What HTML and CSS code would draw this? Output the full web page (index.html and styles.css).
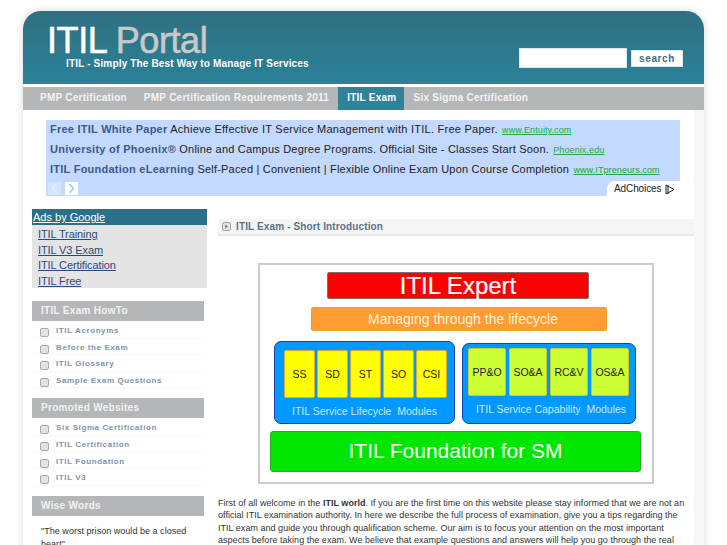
FILE: index.html
```html
<!DOCTYPE html>
<html lang="en">
<head>
<meta charset="utf-8">
<title>ITIL Portal</title>
<link rel="stylesheet" href="styles.css">
</head>
<body>
<div class="page">
  <header class="header">
    <div class="brand">
      <div class="logo">ITIL <span class="logo-light">Portal</span></div>
      <div class="tagline">ITIL - Simply The Best Way to Manage IT Services</div>
    </div>
    <form class="search">
      <input class="search-input" type="text" aria-label="Search">
      <button class="search-btn" type="button">search</button>
    </form>
  </header>
  <nav class="nav">
    <a class="nav-item">PMP Certification</a>
    <a class="nav-item">PMP Certification Requirements 2011</a>
    <a class="nav-item nav-active">ITIL Exam</a>
    <a class="nav-item">Six Sigma Certification</a>
  </nav>
  <div class="content">
    <section class="adbox">
      <p class="ad"><b>Free ITIL White Paper</b> Achieve Effective IT Service Management with ITIL. Free Paper. <a>www.Entuity.com</a></p>
      <p class="ad ad-tight"><b>University of Phoenix®</b> Online and Campus Degree Programs. Official Site - Classes Start Soon. <a>Phoenix.edu</a></p>
      <p class="ad ad-tight"><b>ITIL Foundation eLearning</b> Self-Paced | Convenient | Flexible Online Exam Upon Course Completion <a>www.ITpreneurs.com</a></p>
      <div class="ad-foot">
        <div class="arrows">
          <span class="arrow arrow-off"><svg width="7" height="11" viewBox="0 0 7 11"><path d="M5.5 1 1.5 5.5 5.5 10" fill="none" stroke="#e6effe" stroke-width="1.6"/></svg></span>
          <span class="arrow"><svg width="7" height="11" viewBox="0 0 7 11"><path d="M1.5 1 5.5 5.5 1.5 10" fill="none" stroke="#a9c4f0" stroke-width="1.6"/></svg></span>
        </div>
        <div class="adchoices">AdChoices <svg width="10" height="11" viewBox="0 0 10 11"><path d="M1 1 9 5.5 1 10Z M3 1V10" fill="none" stroke="#222" stroke-width="1"/></svg></div>
      </div>
    </section>
    <div class="columns">
      <aside class="sidebar">
        <div class="gads">
          <div class="gads-title">Ads by Google</div>
          <a class="gads-link">ITIL Training</a>
          <a class="gads-link">ITIL V3 Exam</a>
          <a class="gads-link">ITIL Certification</a>
          <a class="gads-link">ITIL Free</a>
        </div>
        <h3 class="side-title">ITIL Exam HowTo</h3>
        <ul class="side-list">
          <li class="side-item">ITIL Acronyms</li>
          <li class="side-item">Before the Exam</li>
          <li class="side-item">ITIL Glossary</li>
          <li class="side-item">Sample Exam Questions</li>
        </ul>
        <h3 class="side-title">Promoted Websites</h3>
        <ul class="side-list">
          <li class="side-item">Six Sigma Certification</li>
          <li class="side-item">ITIL Certification</li>
          <li class="side-item">ITIL Foundation</li>
          <li class="side-item">ITIL V3</li>
        </ul>
        <h3 class="side-title">Wise Words</h3>
        <p class="quote">"The worst prison would be a closed heart"</p>
      </aside>
      <main class="main">
        <h2 class="main-title">
          <svg class="title-icon" width="9" height="9" viewBox="0 0 9 9"><rect x=".5" y=".5" width="8" height="8" rx="2" fill="#e6e6e6" stroke="#999"/><path d="M3.2 2.3 6 4.5 3.2 6.7Z" fill="#777"/></svg>
          ITIL Exam - Short Introduction
        </h2>
        <div class="diagram">
          <div class="d-expert">ITIL Expert</div>
          <div class="d-manage">Managing through the lifecycle</div>
          <div class="d-modules">
            <div class="d-group d-group-a">
              <div class="d-cells">
                <div class="d-cell d-yellow">SS</div>
                <div class="d-cell d-yellow">SD</div>
                <div class="d-cell d-yellow">ST</div>
                <div class="d-cell d-yellow">SO</div>
                <div class="d-cell d-yellow">CSI</div>
              </div>
              <div class="d-label">ITIL Service Lifecycle&nbsp; Modules</div>
            </div>
            <div class="d-group d-group-b">
              <div class="d-cells d-cells-b">
                <div class="d-cell d-lime">PP&amp;O</div>
                <div class="d-cell d-lime">SO&amp;A</div>
                <div class="d-cell d-lime">RC&amp;V</div>
                <div class="d-cell d-lime">OS&amp;A</div>
              </div>
              <div class="d-label d-label-b">ITIL Service Capability&nbsp; Modules</div>
            </div>
          </div>
          <div class="d-foundation">ITIL Foundation for SM</div>
        </div>
        <p class="intro">First of all welcome in the <b>ITIL world</b>. If you are the first time on this website please stay informed that we are not an<br>official ITIL examination authority. In here we describe the full process of examination, give you a tips regarding the<br>ITIL exam and guide you through qualification scheme. Our aim is to focus your attention on the most important<br>aspects before taking the exam. We believe that example questions and answers will help you go through the real</p>
      </main>
    </div>
  </div>
</div>
</body>
</html>
```

FILE: styles.css
```css
html, body { margin: 0; padding: 0; height: 545px; overflow: hidden; background: #fff; }
body { font-family: "Liberation Sans", Arial, sans-serif; }
.page {
  width: 681px;
  margin: 11px 0 0 23px;
  border-radius: 18px 18px 0 0;
  box-shadow: 0 0 6px 2px #e6e6e6;
  background: #fff;
}
.header {
  height: 73px;
  border-radius: 18px 18px 0 0;
  background: linear-gradient(#2f7080, #2b8199);
  display: flex;
  justify-content: space-between;
  box-sizing: border-box;
  padding-left: 24px;
}
.logo {
  font-size: 36px;
  line-height: 32px;
  letter-spacing: -.4px;
  color: #fff;
  margin-top: 14px;
  -webkit-text-stroke: .6px currentColor;
}
.logo-light { color: #c9c9c9; }
.tagline {
  font-size: 10px;
  font-weight: bold;
  line-height: 13px;
  letter-spacing: .16px;
  color: #fff;
  margin: 0 0 0 19px;
}
.search { display: flex; align-items: center; gap: 4px; padding: 37px 21px 0 0; height: 20px; }
.search-input { width: 108px; height: 20px; box-sizing: border-box; border: 1px solid #dfe6ea; background: #fff; padding: 0; }
.search-btn {
  width: 52px; height: 17px; box-sizing: border-box; padding: 0;
  border: 1px solid #dfe6ea; background: #fff;
  font: bold 10px "Liberation Sans", Arial, sans-serif;
  letter-spacing: .6px; color: #3f6b80;
}
.nav {
  margin-top: 3px;
  height: 23px;
  background: #b5b6b8;
  display: flex;
  font-size: 10px;
  font-weight: bold;
  letter-spacing: .25px;
  line-height: 22px;
  color: #f4f4f4;
  padding-left: 8px;
}
.nav-item { padding: 0 9px; margin-right: -1px; white-space: nowrap; }
.nav-active { background: #2f8298; color: #fff; margin: 0 0 0 1px; padding: 0 8px 0 9px; }
.content { border-right: 10px solid #f7f8f7; box-sizing: border-box; padding: 10px 0 0 9px; }
.adbox {
  width: 634px;
  height: 76px;
  margin-left: 14px;
  box-sizing: border-box;
  background: #c3d9ff;
  overflow: hidden;
}
.ad {
  margin: 0 0 0 4px;
  height: 20px;
  line-height: 18px;
  font-size: 11px;
  letter-spacing: .25px;
  color: #222;
  white-space: nowrap;
}
.ad-tight { letter-spacing: .2px; }
.ad b { color: #3c5a8a; letter-spacing: .25px; }
.ad a { font-size: 9px; color: #22a83a; text-decoration: underline; letter-spacing: .1px; margin-left: 1px; }
.ad-foot { display: flex; justify-content: space-between; margin-top: 1px; }
.arrows { display: flex; gap: 4px; margin: 1px 0 0 2px; }
.arrow { width: 13px; height: 13px; background: #fff; display: flex; align-items: center; justify-content: center; }
.arrow-off { background: #d4e4ff; }
.adchoices {
  width: 73px; height: 16px; box-sizing: border-box;
  background: #fff;
  border-radius: 8px 0 0 0;
  font-size: 10px;
  line-height: 16px;
  letter-spacing: -.1px;
  color: #222;
  padding-left: 7px;
  display: flex; align-items: center; gap: 4px;
}
.columns { display: flex; align-items: flex-start; margin-top: 13px; }
.sidebar { width: 175px; flex: none; }
.gads { background: #e4e4e4; height: 79px; font-size: 11px; }
.gads-title {
  height: 16px; line-height: 16px;
  background: #2b6f8a;
  color: #fff;
  padding-left: 1px;
  text-decoration: underline;
}
.gads-link {
  display: block;
  height: 15.7px;
  line-height: 19px;
  padding-left: 6px;
  color: #2b4a7a;
  text-decoration: underline;
  letter-spacing: -.1px;
}
.side-title {
  width: 172px;
  height: 20px;
  margin: 13px 0 1px;
  box-sizing: border-box;
  background: #b5b6b8;
  font-size: 10px;
  font-weight: bold;
  line-height: 19px;
  letter-spacing: .3px;
  color: #f2f2f2;
  padding-left: 9px;
}
.side-list { list-style: none; margin: 0 0 -3px 2px; padding: 0; width: 168px; }
.side-item {
  position: relative;
  height: 16.6px;
  box-sizing: border-box;
  border-bottom: 1px solid #f6f6f6;
  padding-left: 22px;
  font-size: 8px;
  font-weight: bold;
  line-height: 17.5px;
  letter-spacing: .6px;
  color: #7f92ab;
}
.side-item::before {
  content: "";
  position: absolute;
  left: 6px;
  top: 6px;
  width: 7px;
  height: 7px;
  border: 1px solid #a9a9a9;
  border-radius: 2px;
  background: #e3e3e3;
}
.quote { margin: 9px 0 0 9px; width: 160px; font-size: 9px; line-height: 13px; color: #333; letter-spacing: .03px; }
.main { width: 476px; margin-left: 11px; flex: none; }
.main-title {
  height: 17px;
  margin: 10px 0 0;
  box-sizing: border-box;
  background: #f4f5f5;
  border-bottom: 2px solid #e8e8e8;
  display: flex;
  align-items: center;
  gap: 5px;
  padding-left: 4px;
  font-size: 10px;
  font-weight: bold;
  letter-spacing: .13px;
  color: #5d7288;
}
.title-icon { flex: none; }
.diagram {
  width: 396px;
  height: 221px;
  box-sizing: border-box;
  margin: 27px 0 0 40px;
  border: 2px solid #ccc;
  background: #fff;
  display: flex;
  flex-direction: column;
  align-items: flex-start;
  padding-top: 7px;
}
.d-expert {
  width: 262px; height: 27px; margin-left: 67px;
  box-sizing: border-box;
  background: #ff0000;
  border: 1px solid #8a6a6a;
  border-radius: 2px;
  color: #fff;
  font-size: 24px;
  line-height: 25px;
  text-align: center;
  -webkit-text-stroke: .2px #fff;
}
.d-manage {
  width: 296px; height: 24px; margin: 8px 0 0 51px;
  box-sizing: border-box;
  background: #ff9c33;
  border: 1px solid #e8a030;
  border-radius: 2px;
  color: #fff2d8;
  font-size: 14px;
  line-height: 22px;
  text-align: center;
  padding-left: 8px;
}
.d-modules { display: flex; align-items: flex-end; margin: 10px 0 0 14px; gap: 7px; }
.d-group {
  box-sizing: border-box;
  background: #0099ff;
  border: 1px solid #1a3fb0;
  border-radius: 7px;
  color: #c8e8ff;
}
.d-group-a { width: 181px; height: 83px; padding: 8px 0 0 9px; }
.d-group-b { width: 174px; height: 81px; padding: 4px 0 0 5px; }
.d-cells { display: flex; gap: 2px; }
.d-cells-b { gap: 3px; }
.d-cell {
  box-sizing: border-box;
  border-radius: 2px;
  color: #222;
  font-size: 10.5px;
  display: flex; align-items: center; justify-content: center;
}
.d-yellow { width: 31px; height: 48px; background: #ffff00; border: 1px solid #e8a830; }
.d-lime { width: 38px; height: 48px; background: #ccff33; border: 1px solid #c8c830; }
.d-label { font-size: 10.5px; line-height: 13px; margin-top: 7px; text-align: center; padding-right: 9px; }
.d-label-b { padding-right: 1px; }
.d-foundation {
  width: 371px; height: 41px; margin: 7px 0 0 10px;
  box-sizing: border-box;
  background: #00e600;
  border: 1px solid #22b022;
  border-radius: 3px;
  color: #fff;
  font-size: 21px;
  line-height: 38px;
  text-align: center;
}
.intro { margin: 13px 0 0; font-size: 9px; line-height: 12.4px; letter-spacing: .03px; color: #333; white-space: nowrap; }
```
